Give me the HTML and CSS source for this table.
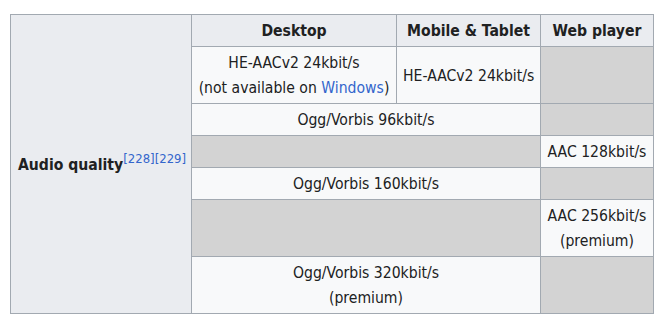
FILE: index.html
```html
<!DOCTYPE html>
<html lang="en">
<head>
<meta charset="utf-8">
<title>Audio quality</title>
<link rel="stylesheet" href="styles.css">
</head>
<body>
<table class="wikitable">
  <colgroup>
    <col class="c1"><col class="c2"><col class="c3"><col class="c4">
  </colgroup>
  <tr>
    <th rowspan="7" class="rowhead">Audio quality<sup class="ref"><a href="#r228">[228]</a><a href="#r229">[229]</a></sup></th>
    <th>Desktop</th>
    <th>Mobile &amp; Tablet</th>
    <th>Web player</th>
  </tr>
  <tr>
    <td>HE-AACv2 24kbit/s<br>(not available on <a href="#windows">Windows</a>)</td>
    <td>HE-AACv2 24kbit/s</td>
    <td class="na"></td>
  </tr>
  <tr>
    <td colspan="2">Ogg/Vorbis 96kbit/s</td>
    <td class="na"></td>
  </tr>
  <tr>
    <td colspan="2" class="na"></td>
    <td>AAC 128kbit/s</td>
  </tr>
  <tr>
    <td colspan="2">Ogg/Vorbis 160kbit/s</td>
    <td class="na"></td>
  </tr>
  <tr>
    <td colspan="2" class="na"></td>
    <td>AAC 256kbit/s<br>(premium)</td>
  </tr>
  <tr>
    <td colspan="2">Ogg/Vorbis 320kbit/s<br>(premium)</td>
    <td class="na"></td>
  </tr>
</table>
</body>
</html>
```

FILE: styles.css
```css
html, body {
  margin: 0;
  padding: 0;
  background: #ffffff;
}
body {
  padding: 14px 0 0 10px;
  font-family: "DejaVu Sans Condensed", "DejaVu Sans", sans-serif;
  font-size: 15.6px;
  color: #202122;
}
.wikitable {
  border-collapse: collapse;
  table-layout: fixed;
  width: 643px;
  background: #f8f9fa;
  border: 1px solid #a2a9b1;
  line-height: 25px;
}
.c1 { width: 181px; }
.c2 { width: 205px; }
.c3 { width: 144px; }
.c4 { width: 113px; }
.wikitable th,
.wikitable td {
  border: 1px solid #a2a9b1;
  padding: 4px 6px 2px;
  text-align: center;
  vertical-align: middle;
  white-space: nowrap;
}
.wikitable th {
  background: #eaecf0;
  font-weight: bold;
}
.wikitable .rowhead {
  text-align: left;
  padding-left: 7px;
}
.wikitable td.na {
  background: #d3d3d3;
}
.wikitable a {
  color: #3366cc;
  text-decoration: none;
}
.ref {
  font-size: 13px;
  font-weight: normal;
  line-height: 1;
  vertical-align: 7px;
}
```
